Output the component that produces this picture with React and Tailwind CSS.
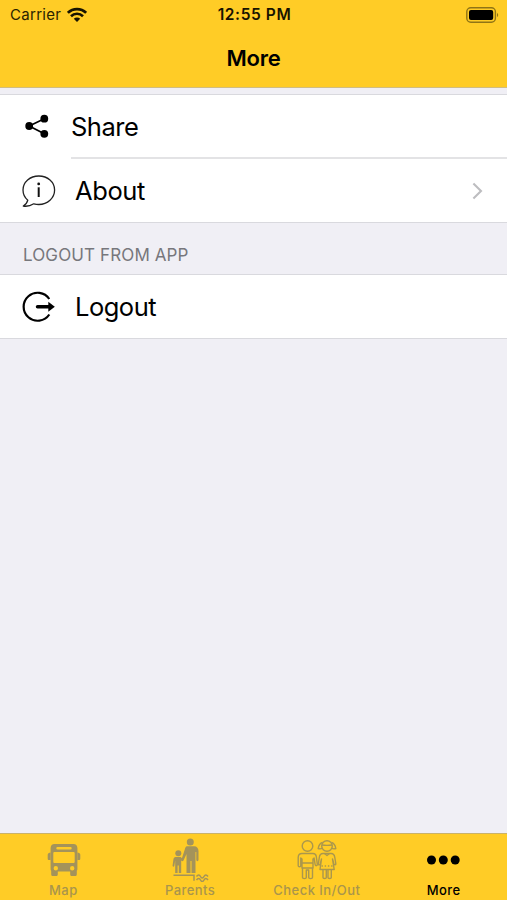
import clsx from 'clsx';

const WifiIcon = () => (
  <svg className="h-4 w-5" viewBox="0 0 20 16" fill="none" stroke="#171300" strokeWidth="2.6">
    <path d="M0.9 5.8a13 13 0 0 1 18.2 0" />
    <path d="M4 9.2a8.6 8.6 0 0 1 12 0" />
    <path d="M10 15l-3.2-3.2a4.6 4.6 0 0 1 6.4 0z" fill="#171300" stroke="none" />
  </svg>
);

const BatteryIcon = () => (
  <svg className="h-4 w-[33px]" viewBox="0 0 33 16" fill="none">
    <rect x="0.8" y="0.8" width="28.6" height="14.4" rx="4" stroke="#8f7416" strokeWidth="1.4" />
    <rect x="3" y="3" width="24.2" height="10" rx="2" fill="#000" />
    <path d="M31 6v4c1.6-.5 1.6-3.5 0-4z" fill="#8f7416" />
  </svg>
);

const ShareIcon = () => (
  <svg className="h-6 w-6" viewBox="0 0 24 24" fill="#000" stroke="#000" strokeWidth="1.7">
    <path d="M19.3 4.7L4.2 12l15.1 7.8" fill="none" />
    <circle cx="4.2" cy="12" r="3.9" stroke="none" />
    <circle cx="19.3" cy="4.7" r="3.9" stroke="none" />
    <circle cx="19.3" cy="19.8" r="3.9" stroke="none" />
  </svg>
);

const AboutIcon = () => (
  <svg className="h-[34px] w-[34px]" viewBox="0 0 34 34" fill="none" stroke="#222" strokeWidth="1.3" strokeLinejoin="round">
    <path d="M5.8 26.2C2.8 23.7 1 20 1 16C1 8 8 2 16.8 2s15.8 6 15.8 14s-7 14.5-15.8 14.500c-1.8 0-3.5-.3-5-.7C9 31.5 4 32.5 1.3 32c2.3-1.4 4-3.4 4.5-5.8z" />
    <path d="M16.700 13.300v9.700" stroke="#111" strokeWidth="2" />
    <circle cx="16.700" cy="9.900" r="1.400" fill="#111" stroke="none" />
  </svg>
);

const LogoutIcon = () => (
  <svg className="h-[34px] w-[34px]" viewBox="0 0 34 34" fill="none" stroke="#000" strokeWidth="2.2">
    <path d="M27.3 9A14 14 0 1 0 27.3 24.5" />
    <path d="M15.5 16.8h12" strokeWidth="3.4" strokeLinecap="round" />
    <path d="M26.3 11.800l6.500 5-6.500 5z" fill="#000" stroke="none" />
  </svg>
);

const ChevronIcon = () => (
  <svg className="h-[18px] w-[11px]" viewBox="0 0 11 18" fill="none" stroke="#bdbdc0" strokeWidth="2.1">
    <path d="M1.4 1.5L9 9l-7.6 7.5" />
  </svg>
);

const BusIcon = () => (
  <svg className="ml-px h-[34px] w-[34px]" viewBox="0 0 34 34" fill="#a4935a">
    <path fillRule="evenodd" d="M7.500 1h19c2.500 0 3.700 1.500 3.900 4v21c0 1.500-.7 2.500-2.200 2.500H5.800c-1.500 0-2.200-1-2.200-2.500V5C3.800 2.500 5 1 7.500 1zM10.500 4a1.200 1.200 0 0 0 0 2.400h13a1.200 1.200 0 0 0 0-2.400zM7.600 9c-.8 0-1.300.5-1.300 1.300v8.400c0 .8.5 1.300 1.300 1.300h18.800c.8 0 1.300-.5 1.300-1.300v-8.400c0-.8-.5-1.300-1.300-1.300zM8.800 23a2.200 2.200 0 1 0 0 4.400a2.200 2.200 0 0 0 0-4.400zM25.200 23a2.200 2.200 0 1 0 0 4.400a2.200 2.200 0 0 0 0-4.400z" />
    <path d="M4.200 28h6.600v3.200c0 1.300-.7 1.800-1.700 1.800h-3.200c-1 0-1.700-.5-1.700-1.800zM23.200 28h6.600v3.200c0 1.300-.7 1.800-1.700 1.800h-3.200c-1 0-1.700-.5-1.700-1.800zM3.600 9.500v7.500H2c-.8 0-1.300-.5-1.300-1.300v-4C.7 10.500 2 9.500 3.600 9.500zM30.400 9.500v7.500H32c.8 0 1.300-.5 1.300-1.300v-4c0-1.200-1.300-2.200-2.900-2.200z" />
  </svg>
);

const ParentsIcon = () => (
  <svg className="h-[44px] w-[38px]" viewBox="0 0 38 44" fill="#a4935a">
    <circle cx="19.3" cy="4" r="3.5" />
    <path d="M16 8.3h7c3 0 4.500 2 4.500 5v8.500c0 1.800-2.200 1.800-2.200 0V14h-.8v21h-4V23h-1v12h-4V16l-3 6.500c-.8 1.500-2.600.6-2-.9l3.200-9.800c.6-2 1-3.500 2.300-3.500z" />
    <circle cx="7.3" cy="15.3" r="3" />
    <path d="M4.700 19h5l2.500 2.600-1 1.400-1-.7V35H7.800v-7.500H6.600V35H4.200V22.400l-.9 5.500c-.3 1.200-1.900 1-1.700-.3l.8-6c.2-1.700.9-2.600 2.300-2.600z" />
    <path d="M2.500 37.300h20.500v5.500M25.500 38.500c1.500-2 3-2 4 0s2.500 2 3.500 0 2.500-2 4 0M25.500 42c1.500-2 3-2 4 0s2.500 2 3.500 0 2.500-2 4 0" fill="none" stroke="#a4935a" strokeWidth="1.5" />
  </svg>
);

const ChildrenIcon = () => (
  <svg className="h-[42px] w-[40px]" viewBox="0 0 40 42" fill="none" stroke="#ab974c" strokeWidth="1.4" strokeLinejoin="round">
    <circle cx="10.5" cy="7" r="5.3" />
    <path d="M5 14.500h11c2 0 3 1 3.300 3l1 7.500c.2 2-1.900 2.300-2.200.5l-1-6.500-1.100 1v9H5v-9L3.800 19v7.500c0 1.700-2.600 1.700-2.600 0v-8c0-2.500 1.300-4 3.800-4z" />
    <path d="M5 24h11M5.500 29v9.500c0 1.500 3.800 1.500 3.800 0V31h2.400v7.500c0 1.500 3.800 1.500 3.800 0V29" />
    <circle cx="30" cy="7" r="5.3" />
    <path d="M25.500 3.500c-2 .5-3.800 3-4.300 6 1.500.7 3 .5 4.500-.5M34.500 3.500c2 .5 3.800 3 4.300 6-1.500.7-3 .5-4.500-.5M25 6c3 .5 7 .5 10 0" />
    <path d="M26 14.500h8c2.500 0 3.500 1.500 3.800 4l1 6c.2 1.500-1.500 1.700-2 .3L35.500 20l1.700 10.500H23L24.500 20l-1.300 5c-.4 1.300-2.100 1.200-1.900-.3l1-6.200c.3-2.500 1.500-4 3.700-4z" />
    <path d="M26 30.500v8c0 1.400 3.300 1.400 3.300 0v-8M31 30.500v8c0 1.400 3.300 1.400 3.300 0v-8M27.500 14.500l2.500 2 2.500-2" />
    <path d="M24.500 27h12" strokeDasharray="1.4 1.8" />
  </svg>
);

const DotsIcon = () => (
  <svg className="h-[10px] w-[34px]" viewBox="0 0 34 10">
    <circle cx="4.5" cy="5" r="4.5" />
    <circle cx="16.3" cy="5" r="4.5" />
    <circle cx="28.2" cy="5" r="4.5" />
  </svg>
);

const tabs = [
  { label: 'Map', icon: BusIcon },
  { label: 'Parents', icon: ParentsIcon },
  { label: 'Check In/Out', icon: ChildrenIcon },
  { label: 'More', icon: DotsIcon, active: true },
];

const StatusBar = () => (
  <div className="grid h-[30px] grid-cols-[1fr_auto_1fr] items-center pr-[8px] pl-[10px] text-[15px] text-[#2b2300]">
    <div className="flex items-center gap-[6px]">
      <span className="tracking-[0.3px]">Carrier</span>
      <WifiIcon />
    </div>
    <span className="text-center text-[15.5px] font-semibold tracking-[0.6px] text-[#171300]">12:55 PM</span>
    <div className="flex justify-end">
      <BatteryIcon />
    </div>
  </div>
);

const App = () => (
  <div className="flex h-[900px] w-[507px] flex-col bg-[#f0eff5] font-['Inter',sans-serif] text-black">
    <header className="h-[88px] border-b border-[#d1bd80] bg-[#ffcc26]">
      <StatusBar />
      <h1 className="mt-[12px] text-center text-[22px] leading-8 font-semibold tracking-[-0.2px]">More</h1>
    </header>

    <main className="flex-1 pt-[6px]">
      <section className="border-y border-[#d9d9de] bg-white">
        <div className="flex h-[62px] items-center pl-[25px]">
          <ShareIcon />
          <span className="ml-[22px] pt-[2px] text-[25.5px] tracking-[-0.5px]">Share</span>
        </div>
        <div className="ml-[71px] h-[2px] bg-[#e3e3e5]" />
        <div className="flex h-[63px] items-center pr-[24px] pl-[22px]">
          <AboutIcon />
          <span className="ml-[19px] flex-1 pt-[2px] text-[25.5px] tracking-[-0.4px]">About</span>
          <ChevronIcon />
        </div>
      </section>

      <h2 className="flex h-[51px] items-end pb-[6px] pl-[23px] text-[17px] tracking-[0.12px] text-[#77777c]">LOGOUT FROM APP</h2>

      <section className="border-y border-[#d9d9de] bg-white">
        <div className="flex h-[63px] items-center pl-[22px]">
          <LogoutIcon />
          <span className="ml-[19px] pt-[2px] text-[25.5px] tracking-[-0.5px]">Logout</span>
        </div>
      </section>
    </main>

    <nav className="grid h-[67px] grid-cols-4 border-t border-[#c9b26b] bg-[#ffcc26]">
      {tabs.map(({ label, icon: Icon, active }) => (
        <div key={label} className={clsx('flex flex-col items-center', active ? 'text-black' : 'text-[#a9954c]')}>
          <div className="flex h-[50px] items-center justify-center pt-[2px]">
            <Icon />
          </div>
          <span className="text-[13px] leading-[13px] font-medium tracking-[0.45px] whitespace-nowrap">{label}</span>
        </div>
      ))}
    </nav>
  </div>
);

export default App;
